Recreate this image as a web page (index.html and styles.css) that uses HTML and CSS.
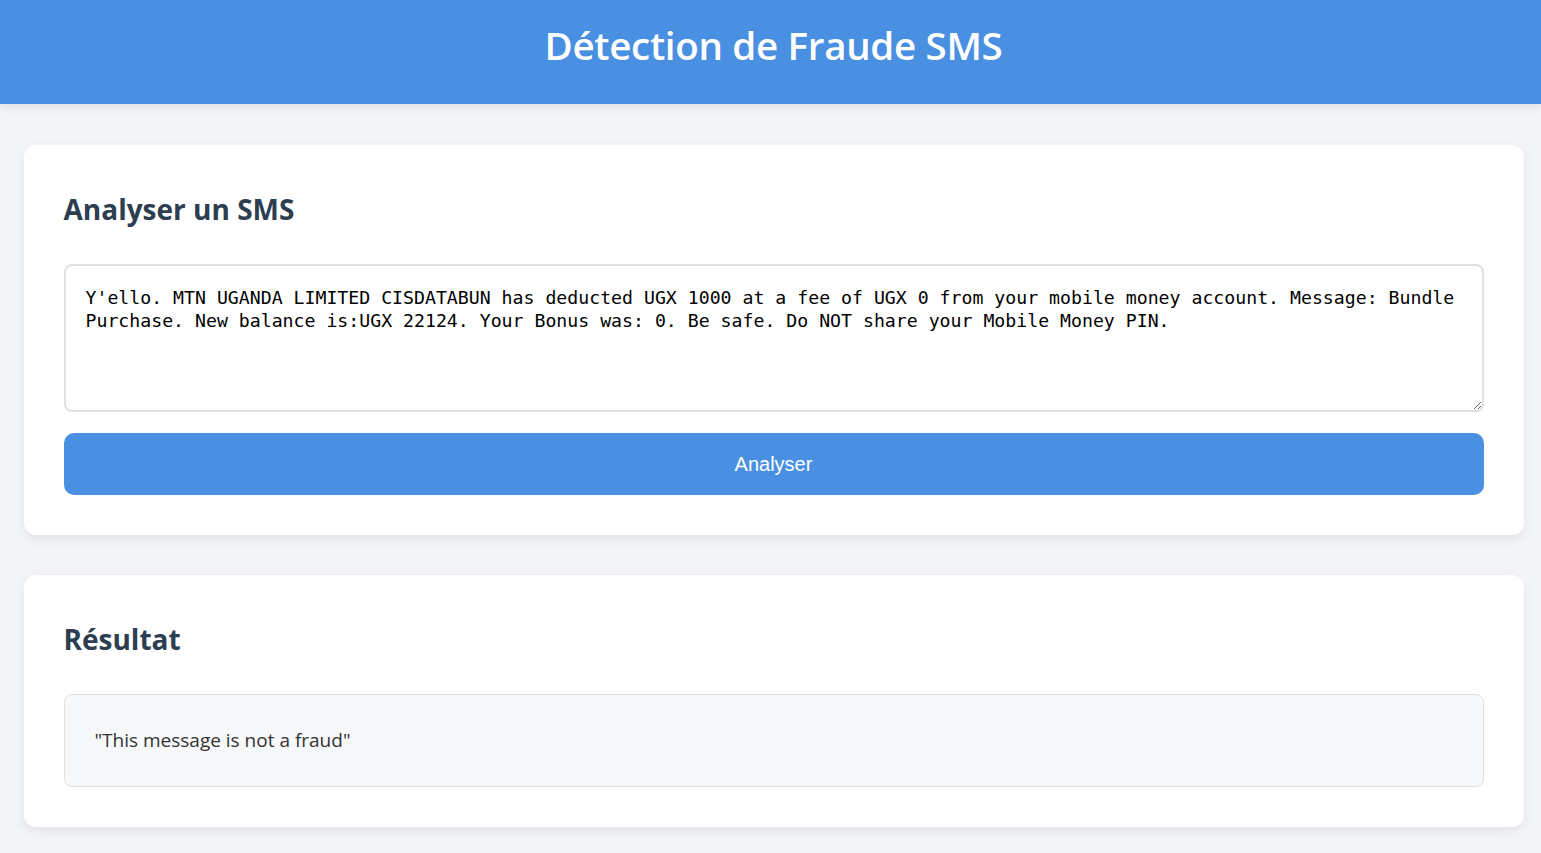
FILE: index.html
```html
<!DOCTYPE html>
<html lang="fr">
<head>
<meta charset="utf-8">
<title>Détection de Fraude SMS</title>
<link rel="stylesheet" href="styles.css">
</head>
<body>
<header class="site-header">
  <h1 class="site-title">Détection de Fraude SMS</h1>
</header>
<div class="page">
  <main class="container">
    <section class="card">
      <h2 class="card-title">Analyser un SMS</h2>
      <textarea class="sms-input" spellcheck="true">Y'ello. MTN UGANDA LIMITED CISDATABUN has deducted UGX 1000 at a fee of UGX 0 from your mobile money account. Message: Bundle Purchase. New balance is:UGX 22124. Your Bonus was: 0. Be safe. Do NOT share your Mobile Money PIN.</textarea>
      <button class="analyze-btn" type="button">Analyser</button>
    </section>
    <section class="card">
      <h2 class="card-title">Résultat</h2>
      <div class="result-box">"This message is not a fraud"</div>
    </section>
  </main>
</div>
</body>
</html>
```
FILE: styles.css
```css
* { box-sizing: border-box; }
body {
  margin: 0;
  background: #f4f5f9;
  font-family: "Open Sans", "Noto Sans", sans-serif;
  color: #333;
}
.site-header {
  background: #4a90e2;
  color: #fff;
  height: 104px;
  padding-left: 6px;
  display: flex;
  align-items: center;
  justify-content: center;
  box-shadow: 0 2px 10px rgba(0,0,0,0.12);
}
.site-title {
  margin: 0 0 14px;
  font-size: 38.5px;
  font-weight: 600;
  line-height: 1.2;
  letter-spacing: -0.3px;
}
.page {
  padding-left: 6px;
}
.container {
  max-width: 1500px;
  margin: 41px auto 0;
}
.card {
  background: #fff;
  border-radius: 12px;
  padding: 40px;
  margin-bottom: 40px;
  box-shadow: 0 4px 12px rgba(0,0,0,0.08);
}
.card-title {
  margin: 0 0 30px;
  font-size: 28px;
  line-height: 49px;
  font-weight: 700;
  color: #2c3e50;
}
.sms-input {
  display: block;
  width: 100%;
  height: 148px;
  margin: 0 0 21px;
  padding: 20px;
  border: 2px solid #e0e0e0;
  border-radius: 8px;
  font-family: "DejaVu Sans Mono", "Liberation Mono", monospace;
  font-size: 18.2px;
  line-height: 23px;
  color: #000;
  background: #fff;
  resize: vertical;
  outline: none;
}
.analyze-btn {
  display: block;
  width: 100%;
  height: 62px;
  border: none;
  border-radius: 10px;
  background: #4a90e2;
  color: #fff;
  font-family: "Liberation Sans", Arial, sans-serif;
  font-size: 20px;
  cursor: pointer;
}
.result-box {
  background: #f7f8fa;
  border: 1px solid #e0e0e0;
  border-radius: 8px;
  padding: 30px;
  font-size: 19px;
  line-height: 31px;
  color: #333;
}
```
